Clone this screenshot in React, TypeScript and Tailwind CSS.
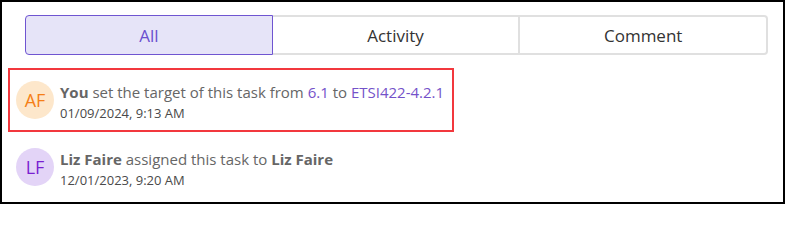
import React from 'react';

const font = { fontFamily: '"Open Sans", "Noto Sans", sans-serif' };

function Avatar({ initials, tone }: { initials: string; tone: 'orange' | 'purple' }) {
  const cls =
    tone === 'orange'
      ? 'bg-[#fde7cb] text-[#f57f17]'
      : 'bg-[#e3d4f7] text-[#7a1fd1]';
  return (
    <div className={`flex h-[38px] w-[38px] shrink-0 items-center justify-center rounded-full text-[18px] font-medium ${cls}`}>
      {initials}
    </div>
  );
}

export default function App() {
  const tabs = ['All', 'Activity', 'Comment'];
  return (
    <div className="h-[204px] w-[785px] border-2 border-black bg-white" style={font}>
      {/* Tabs */}
      <div className="ml-[23px] mr-[15px] mt-[13px] flex h-[40px]">
        {tabs.map((t, i) => (
          <div
            key={t}
            className={
              i === 0
                ? 'flex flex-1 items-center justify-center rounded-l-[4px] border border-[#6f55d1] bg-[#e6e4f8] pt-[1px] text-[17px] text-[#6b4fcf]'
                : i === 1
                ? 'flex flex-1 items-center justify-center border-y-2 border-r-2 border-[#e0e0e0] pt-[1px] text-[17px] text-[#333]'
                : 'flex flex-1 items-center justify-center rounded-r-[4px] border-y-2 border-r-2 border-[#e0e0e0] pt-[1px] text-[17px] text-[#333]'
            }
          >
            {t}
          </div>
        ))}
      </div>

      {/* Activity feed */}
      <div className="ml-[6px] mt-[13px] flex flex-col items-start gap-[3px]">
        <div className="flex h-[64px] items-center gap-[6px] border-2 border-[#f2383d] pl-[6px] pr-[8px]">
          <Avatar initials="AF" tone="orange" />
          <div className="flex flex-col pt-[4px]">
            <div className="text-[15px] leading-[22px] text-[#666]">
              <span className="font-bold">You</span> set the target of this task from{' '}
              <span className="text-[#7452c9]">6.1</span> to{' '}
              <span className="text-[#7452c9]">ETSI422-4.2.1</span>
            </div>
            <div className="text-[13px] leading-[20px] text-[#4a4a4a]">01/09/2024, 9:13 AM</div>
          </div>
        </div>

        <div className="flex h-[64px] items-center gap-[6px] border-2 border-transparent pl-[6px] pr-[8px]">
          <Avatar initials="LF" tone="purple" />
          <div className="flex flex-col pt-[4px]">
            <div className="text-[15px] leading-[22px] text-[#666]">
              <span className="font-bold">Liz Faire</span> assigned this task to{' '}
              <span className="font-bold">Liz Faire</span>
            </div>
            <div className="text-[13px] leading-[20px] text-[#4a4a4a]">12/01/2023, 9:20 AM</div>
          </div>
        </div>
      </div>
    </div>
  );
}
